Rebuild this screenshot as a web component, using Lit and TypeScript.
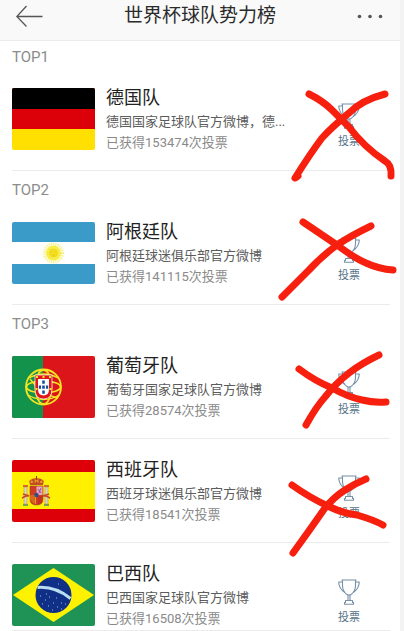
import { LitElement, html, css, svg, nothing, type TemplateResult } from "lit";
import { customElement, property } from "lit/decorators.js";

interface Team {
  rank?: string;
  name: string;
  about: string;
  votes: number;
  flag: string;
  strokes: string[];
}

const teams: Team[] = [
  {
    rank: "TOP1",
    name: "德国队",
    about: "德国国家足球队官方微博，德...",
    votes: 153474,
    flag: "germany",
    strokes: [
      "M59 27Q73 34 82 43L99 60Q114 80 135 94Q142 98 141 109",
      "M135 27Q112 33 99 46Q82 60 72 71Q60 87 45 111L48 109",
    ],
  },
  {
    rank: "TOP2",
    name: "阿根廷队",
    about: "阿根廷球迷俱乐部官方微博",
    votes: 141115,
    flag: "argentina",
    strokes: ["M53 21L87 44Q106 58 116 62Q129 68 143 69", "M121 25Q102 34 87 44Q72 55 59 69L32 96"],
  },
  {
    rank: "TOP3",
    name: "葡萄牙队",
    about: "葡萄牙国家足球队官方微博",
    votes: 28574,
    flag: "portugal",
    strokes: ["M49 34Q65 46 82 53Q98 62 112 65Q124 68 136 67", "M129 20Q112 28 99 38Q86 48 75 62Q66 72 56 90"],
  },
  {
    name: "西班牙队",
    about: "西班牙球迷俱乐部官方微博",
    votes: 18541,
    flag: "spain",
    strokes: ["M42 46Q60 59 80 68Q92 74 107 76Q124 81 133 86", "M116 40Q104 45 95 51Q84 58 75 69Q59 92 43 114"],
  },
  {
    name: "巴西队",
    about: "巴西国家足球队官方微博",
    votes: 16508,
    flag: "brazil",
    strokes: [],
  },
];

const flags: Record<string, TemplateResult> = {
  germany: svg`
    <rect width="83" height="62" fill="#ffe000"/>
    <rect width="83" height="41" fill="#dc0008"/>
    <rect width="83" height="21" fill="#000"/>`,
  argentina: svg`
    <rect width="83" height="62" fill="#3b9bc8"/>
    <rect y="20" width="83" height="22" fill="#fff"/>
    <circle cx="41.500" cy="31" r="9" fill="none" stroke="#f9f08a" stroke-width="3" stroke-dasharray="1.200 1"/>
    <circle cx="41.500" cy="31" r="7.500" fill="#f7ee45"/>
    <circle cx="41.500" cy="31" r="4" fill="#f7e01c" stroke="#ecc91f" stroke-width=".6"/>
    <path d="M39.500 30h1M42.500 30h1M40 33h3" stroke="#dcb41c" stroke-width=".7"/>`,
  portugal: svg`
    <rect width="83" height="62" fill="#dc151b"/>
    <rect width="31" height="62" fill="#12924b"/>
    <g fill="none" stroke="#f4e421" stroke-width="1.800">
      <circle cx="31.500" cy="31" r="17.500"/>
      <ellipse cx="31.500" cy="31" rx="17" ry="6"/>
      <ellipse cx="31.500" cy="31" rx="8" ry="17"/>
      <path d="M17 22Q32 14 46 22M16 39Q32 48 47 39M18 23Q30 39 46 42" stroke-width="1.300"/>
    </g>
    <path d="M23 19H40V33Q40 43 31.500 43Q23 43 23 33Z" fill="#df171c" stroke="#fff" stroke-width=".7"/>
    <path d="M26 23H37V33Q37 39.500 31.500 39.500Q26 39.500 26 33Z" fill="#fff"/>
    <path d="M30.200 24.500h2.600v3.200h-2.600zM30.200 29.500h2.600v3.200h-2.600zM30.200 34.500h2.600v3.200h-2.600zM26.800 29.500h2.200v3.200h-2.200zM34 29.500h2.200v3.200h-2.200z" fill="#174f9a"/>
    <path d="M24 20h2v2h-2zM30.500 20h2v2h-2zM37 20h2v2h-2zM23.500 32h2v2h-2zM37.500 32h2v2h-2z" fill="#f4e421"/>`,
  spain: svg`
    <rect width="83" height="62" fill="#dd0008"/>
    <rect y="12" width="83" height="37" fill="#fff000"/>
    <path d="M12 27h3v17h-3zM33 27h3v17h-3z" fill="#d9d5c1" stroke="#b18a62" stroke-width=".5"/>
    <path d="M11 45h5M32 45h5" stroke="#528a69" stroke-width="1.600"/>
    <path d="M11 26h5M32 26h5M11 34l6 2M10 38l6-3M37 34l-6 2M38 38l-6-3" stroke="#c84732" stroke-width="1.500"/>
    <path d="M18 26H31V39Q31 45 24.500 45Q18 45 18 39Z" fill="#cf3b25" stroke="#9b4a2b" stroke-width=".6"/>
    <path d="M24.500 26.500H30.500V35H24.500Z" fill="#e7a6c3"/>
    <path d="M18.500 35.500H24V44Q18.500 43 18.500 38Z" fill="#e89a20"/>
    <path d="M20 36v7M22 36v8M27 36v8M29 36v7" stroke="#b52720" stroke-width=".8"/>
    <path d="M26 29l3 4M29 28l-2 5" stroke="#8a438c" stroke-width=".8"/>
    <circle cx="24.500" cy="35" r="2.200" fill="#315087"/>
    <path d="M18 25L17 21Q20 18 24.500 18Q29 18 32 21L31 25Z" fill="#d9661f"/>
    <path d="M18 24H31M21 19v4M28 19v4M24.500 16v7" stroke="#a23922" stroke-width="1"/>
    <path d="M19 22h2M23 21h3M28 22h2" stroke="#f1ca4b" stroke-width="1"/>`,
  brazil: svg`
    <rect width="83" height="62" fill="#1f9256"/>
    <path d="M1 31L41.500 4L82 31L41.500 58Z" fill="#fff200"/>
    <circle cx="41.500" cy="31" r="18" fill="#102f86"/>
    <path d="M25.500 23.500Q43 22 58.500 34.500" fill="none" stroke="#b9def2" stroke-width="3"/>
    <path d="M28 32h1M33 36h1M37 33h1M30 40h1M36 42h1M41 39h1M45 43h1M49 39h1M53 40h1M44 34h1M46 20h1M40 46h1M34 30h1M49 45h1" stroke="#9dbbe2" stroke-width="1"/>`,
};

@customElement("team-row")
export class TeamRow extends LitElement {
  @property({ attribute: false }) team!: Team;

  static styles = css`
    :host {
      position: relative;
      display: flex;
      align-items: flex-start;
      gap: 11px;
      margin: 0 10px 0 12px;
      padding: 21px 0 20px;
      border-bottom: 1px solid #ebebeb;
    }
    :host([last]) {
      padding-bottom: 4px;
    }
    .flag {
      flex: none;
      width: 83px;
      height: 62px;
      border-radius: 2px;
    }
    .info {
      flex: 1;
      min-width: 0;
    }
    .name,
    .about,
    .votes {
      margin: 0;
      font-weight: 400;
      white-space: nowrap;
    }
    .name {
      font-size: 18px;
      line-height: 20px;
      color: #222;
    }
    .about {
      margin: 4px 0 3px;
      overflow: hidden;
      text-overflow: ellipsis;
      font-size: 13px;
      line-height: 20px;
      color: #5c5c5c;
    }
    .votes {
      font-size: 13px;
      line-height: 15px;
      color: #8a8a8a;
    }
    .vote {
      flex: none;
      display: flex;
      flex-direction: column;
      align-items: center;
      gap: 5px;
      width: 82px;
      margin-left: -11px;
      padding: 15px 0 0;
      border: 0;
      background: none;
      font: inherit;
      font-size: 11px;
      line-height: 16px;
      color: #577489;
      cursor: pointer;
    }
    .cup {
      display: block;
      width: 22px;
      height: 26px;
    }
    .cross {
      position: absolute;
      top: 0;
      right: 0;
      width: 140px;
      height: 104px;
      overflow: visible;
      pointer-events: none;
    }
  `;

  render() {
    const t = this.team;
    return html`
      <svg class="flag" viewBox="0 0 83 62" aria-hidden="true">${flags[t.flag]}</svg>
      <div class="info">
        <h2 class="name">${t.name}</h2>
        <p class="about">${t.about}</p>
        <p class="votes">已获得${t.votes}次投票</p>
      </div>
      <button class="vote" type="button">
        <svg class="cup" viewBox="0 0 22 26" fill="none" stroke="#7590a8" stroke-width="1.100" stroke-linejoin="round" aria-hidden="true">
          <path d="M3.500 1H18.500M4.500 1V7Q5 13 9 15.500Q11 16.500 13 15.500Q17 13 17.500 7V1"/>
          <path d="M4.500 3H.7Q1 10 7 13.500M17.500 3H21.300Q21 10 15 13.500"/>
          <path d="M10 16V21.500M12 16V21.500M7.500 21.500H14.500V23.500H15.500V25.300H6.500V23.500H7.500Z"/>
        </svg>
        <span>投票</span>
      </button>
      ${t.strokes.length
        ? html`<svg class="cross" viewBox="0 0 140 104" fill="none" stroke="#f7200f" stroke-width="7" stroke-linecap="round" stroke-linejoin="round" aria-hidden="true">
            ${t.strokes.map((d) => svg`<path d=${d}/>`)}
          </svg>`
        : nothing}
    `;
  }
}

@customElement("app-root")
export class AppRoot extends LitElement {
  static styles = css`
    :host {
      display: block;
      min-height: 100vh;
      box-sizing: border-box;
      border-right: 4px solid #f3f3f3;
      background: #fff;
      font-family: Roboto, "Noto Sans CJK SC", sans-serif;
    }
    .bar {
      display: grid;
      grid-template-columns: 60px 1fr 60px;
      align-items: center;
      padding-bottom: 8px;
      border-bottom: 1px solid #ececec;
      background: #f9f9f9;
    }
    .title {
      margin: 0;
      font-size: 19px;
      font-weight: 400;
      line-height: 32px;
      text-align: center;
      color: #2b2b2b;
    }
    .tool {
      display: flex;
      padding: 0 16px;
      border: 0;
      background: none;
      cursor: pointer;
    }
    .more {
      justify-content: flex-end;
    }
    .icon {
      flex: none;
      width: 28px;
      height: 32px;
    }
    .rank {
      margin: 0;
      padding: 9px 12px 1px;
      font-size: 15px;
      font-weight: 400;
      line-height: 20px;
      color: #8c8c8c;
    }
    .bar + .rank {
      padding: 6px 12px 0;
    }
  `;

  render() {
    return html`
      <header class="bar">
        <button class="tool" type="button" aria-label="返回">
          <svg class="icon" viewBox="0 0 28 32" fill="none" stroke="#555" stroke-width="1.300">
            <path d="M26.500 16.500H.8M10.500 6L.8 16.500L10.500 26.500"/>
          </svg>
        </button>
        <h1 class="title">世界杯球队势力榜</h1>
        <button class="tool more" type="button" aria-label="更多">
          <svg class="icon" viewBox="0 0 28 32" fill="#555">
            <circle cx="3.500" cy="16.500" r="1.800"/>
            <circle cx="14" cy="16.500" r="1.800"/>
            <circle cx="24.500" cy="16.500" r="1.800"/>
          </svg>
        </button>
      </header>
      ${teams.map(
        (t, i) => html`${t.rank ? html`<p class="rank">${t.rank}</p>` : nothing}<team-row
            .team=${t}
            ?last=${i === teams.length - 1}
          ></team-row>`,
      )}
    `;
  }
}
